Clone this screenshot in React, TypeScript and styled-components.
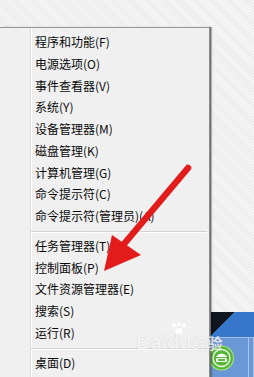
import React from "react";
import styled, { createGlobalStyle } from "styled-components";

const GlobalStyle = createGlobalStyle`
  html, body { margin: 0; padding: 0; overflow: hidden; }
  body { font-family: "Noto Sans CJK SC", "Noto Sans", sans-serif; }
`;

const Screen = styled.div`
  position: relative;
  width: 254px;
  height: 377px;
  display: flex;
  overflow: hidden;
  background-color: #f1f1f1;
  background-image: repeating-linear-gradient(
    45deg,
    #f6f6f6 0px,
    #f6f6f6 1px,
    #ececec 1px,
    #ececec 2px
  );
`;

const LeftCol = styled.div`
  position: relative;
  z-index: 2;
  width: 210px;
  display: flex;
  flex-direction: column;
`;

const TopGap = styled.div`
  height: 27px;
  flex: none;
`;

const Menu = styled.div`
  flex: 1;
  display: flex;
  background: #f0f0f0;
  border-top: 1px solid #979797;
  border-right: 1px solid #8c8c8c;
  box-shadow: 1px 0 0 #6f6f6f, 2px 0 1px rgba(0, 0, 0, 0.25);
`;

const Gutter = styled.div`
  width: 30px;
  flex: none;
  border-right: 1px solid #dcdcdc;
`;

const Items = styled.div`
  flex: 1;
  display: flex;
  flex-direction: column;
  padding-top: 3px;
  border-left: 1px solid #ffffff;
`;

const Item = styled.div`
  height: 21.75px;
  line-height: 21.75px;
  padding-left: 3px;
  font-size: 12px;
  color: #0a0a0a;
  white-space: nowrap;
`;

const Separator = styled.div`
  height: 1px;
  margin: 4px 2px 3px -1px;
  background: #d3d3d3;
  box-shadow: 0 1px 0 #ffffff;
`;

const RightCol = styled.div`
  flex: 1;
  display: flex;
  flex-direction: column;
`;

const Desktop = styled.div`
  flex: 1;
`;

const Taskbar = styled.div`
  height: 65px;
  flex: none;
  display: flex;
  flex-direction: column;
`;

const TaskTop = styled.div`
  height: 25px;
  flex: none;
  background-color: #3677cc;
  background-image: linear-gradient(135deg, #0f1620 50%, transparent 52%);
  background-size: 24px 24px;
  background-repeat: no-repeat;
`;

const Tiles = styled.div`
  flex: 1;
  display: flex;
  background: #3f79c6;
`;

const Tile = styled.div<{ $w?: number }>`
  width: ${(p) => (p.$w ? `${p.$w}px` : "auto")};
  flex: ${(p) => (p.$w ? "none" : "1")};
  display: flex;
  align-items: flex-start;
  padding-top: 7px;
  background: #6a98d6;
  border-top: 1px solid #9fbde6;
  border-right: 1px solid #a9c4ea;
  box-sizing: border-box;
`;

const OrbWrap = styled.div`
  margin-left: -1px;
  width: 25px;
  height: 26px;
`;

const ArrowLayer = styled.svg`
  position: absolute;
  left: 0;
  top: 0;
  z-index: 5;
  pointer-events: none;
`;

const Watermark = styled.div`
  position: absolute;
  z-index: 6;
  left: 136px;
  top: 332px;
  display: flex;
  align-items: flex-end;
  font-family: "Liberation Sans", Arial, sans-serif;
  font-weight: bold;
  font-size: 20px;
  line-height: 20px;
  color: rgba(255, 255, 255, 0.8);
  text-shadow: 0 0 1px rgba(0, 0, 0, 0.2);
  pointer-events: none;
`;

const Du = styled.span`
  position: relative;
`;

const Paw = styled.svg`
  position: absolute;
  left: 3px;
  top: -10px;
`;

const Jingyan = styled.span`
  margin-left: 1px;
  font-family: "Noto Sans CJK SC", sans-serif;
  font-size: 15px;
  line-height: 18px;
  font-weight: 700;
`;

const group1 = [
  "程序和功能(F)",
  "电源选项(O)",
  "事件查看器(V)",
  "系统(Y)",
  "设备管理器(M)",
  "磁盘管理(K)",
  "计算机管理(G)",
  "命令提示符(C)",
  "命令提示符(管理员)(A)",
];
const group2 = [
  "任务管理器(T)",
  "控制面板(P)",
  "文件资源管理器(E)",
  "搜索(S)",
  "运行(R)",
];
const group3 = ["桌面(D)"];

function Orb() {
  return (
    <svg width="25" height="26" viewBox="0 0 25 26">
      <circle cx="12.5" cy="13" r="12" fill="#55b63a" stroke="#a5dc80" strokeWidth="1.2" />
      <circle cx="12.5" cy="13" r="8.5" fill="none" stroke="#e8f7de" strokeWidth="1.4" />
      <path d="M6.5 12 Q12.5 5 18.5 12 Z" fill="#ffffff" />
      <rect x="7" y="13" width="11" height="4" rx="1.5" fill="#ffffff" />
      <rect x="9" y="14" width="7" height="2" fill="#55b63a" />
    </svg>
  );
}

export default function App() {
  return (
    <>
      <GlobalStyle />
      <Screen>
        <LeftCol>
          <TopGap />
          <Menu>
            <Gutter />
            <Items>
              {group1.map((t) => (
                <Item key={t}>{t}</Item>
              ))}
              <Separator />
              {group2.map((t) => (
                <Item key={t}>{t}</Item>
              ))}
              <Separator />
              {group3.map((t) => (
                <Item key={t}>{t}</Item>
              ))}
            </Items>
          </Menu>
        </LeftCol>
        <RightCol>
          <Desktop />
          <Taskbar>
            <TaskTop />
            <Tiles>
              <Tile $w={39}>
                <OrbWrap>
                  <Orb />
                </OrbWrap>
              </Tile>
              <Tile />
            </Tiles>
          </Taskbar>
        </RightCol>
        <ArrowLayer width="254" height="377" viewBox="0 0 254 377">
          <line
            x1="188"
            y1="168"
            x2="124"
            y2="244"
            stroke="#e41b1b"
            strokeWidth="6.5"
            strokeLinecap="round"
          />
          <polygon points="104,271 112,235 141,255" fill="#e41b1b" />
        </ArrowLayer>
        <Watermark>
          <span>Bai</span>
          <Du>
            <Paw width="18" height="12" viewBox="0 0 18 12">
              <circle cx="4" cy="3" r="2" fill="rgba(255,255,255,0.85)" />
              <circle cx="9" cy="2" r="2" fill="rgba(255,255,255,0.85)" />
              <circle cx="14" cy="3" r="2" fill="rgba(255,255,255,0.85)" />
              <ellipse cx="9" cy="9" rx="4" ry="3" fill="rgba(255,255,255,0.85)" />
            </Paw>
            du
          </Du>
          <Jingyan>经验</Jingyan>
        </Watermark>
      </Screen>
    </>
  );
}
